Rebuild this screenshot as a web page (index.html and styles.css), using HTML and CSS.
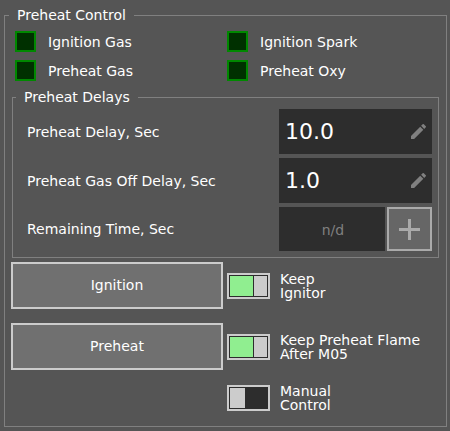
FILE: index.html
```html
<!DOCTYPE html>
<html lang="en">
<head>
    <meta charset="UTF-8">
    <meta name="viewport" content="width=device-width, initial-scale=1.0">
    <title>Preheat Control</title>
    <link rel="stylesheet" href="styles.css">
</head>
<body>
    <fieldset class="panel">
        <legend>Preheat Control</legend>
        <div class="indicators">
            <div class="indicator"><span class="led"></span>Ignition Gas</div>
            <div class="indicator"><span class="led"></span>Ignition Spark</div>
            <div class="indicator"><span class="led"></span>Preheat Gas</div>
            <div class="indicator"><span class="led"></span>Preheat Oxy</div>
        </div>
        <fieldset class="delays">
            <legend>Preheat Delays</legend>
            <div class="delay-row">
                <label for="preheat-delay">Preheat Delay, Sec</label>
                <div class="value-box">
                    <input type="text" id="preheat-delay" value="10.0">
                    <svg class="edit-icon" viewBox="3 3 18 18"><path d="M3 17.25V21h3.75L17.81 9.94l-3.75-3.75L3 17.25zM20.71 7.04a1 1 0 0 0 0-1.41l-2.34-2.34a1 1 0 0 0-1.41 0l-1.83 1.83 3.75 3.75 1.83-1.83z"/></svg>
                </div>
            </div>
            <div class="delay-row">
                <label for="gas-off-delay">Preheat Gas Off Delay, Sec</label>
                <div class="value-box">
                    <input type="text" id="gas-off-delay" value="1.0">
                    <svg class="edit-icon" viewBox="3 3 18 18"><path d="M3 17.25V21h3.75L17.81 9.94l-3.75-3.75L3 17.25zM20.71 7.04a1 1 0 0 0 0-1.41l-2.34-2.34a1 1 0 0 0-1.41 0l-1.83 1.83 3.75 3.75 1.83-1.83z"/></svg>
                </div>
            </div>
            <div class="delay-row">
                <label for="remaining-time">Remaining Time, Sec</label>
                <div class="remaining">
                    <input type="text" id="remaining-time" value="n/d" readonly>
                    <button type="button" class="add-button" aria-label="Add time">
                        <svg viewBox="0 0 21 21"><path d="M9 0h3v9h9v3h-9v9H9v-9H0V9h9z"/></svg>
                    </button>
                </div>
            </div>
        </fieldset>
        <div class="actions">
            <button type="button" class="action-button">Ignition</button>
            <label class="toggle"><input type="checkbox" checked><span>Keep<br>Ignitor</span></label>
            <button type="button" class="action-button">Preheat</button>
            <label class="toggle"><input type="checkbox" checked><span>Keep Preheat Flame<br>After M05</span></label>
            <label class="toggle manual"><input type="checkbox"><span>Manual<br>Control</span></label>
        </div>
    </fieldset>
</body>
</html>
```

FILE: styles.css
```css
* {
    box-sizing: border-box;
}

body {
    margin: 4px 3px 4px 4px;
    background-color: #555;
    color: #fff;
    font-family: Verdana, "DejaVu Sans", sans-serif;
    font-size: 14px;
    line-height: 22px;
}

input,
button {
    font: inherit;
    color: inherit;
    border-radius: 0;
    margin: 0;
}

fieldset {
    min-width: 0;
    margin: 0;
    border: 1px solid #808080;
}

legend {
    padding: 0 8px;
}

.panel {
    padding: 5px 7px 14px 6px;
}

.panel > legend {
    margin-left: -2px;
}

.indicators {
    display: grid;
    grid-template-columns: 1fr 1fr;
    row-gap: 8px;
    padding-left: 4px;
}

.indicator {
    display: flex;
    align-items: center;
    gap: 12px;
    height: 21px;
}

.led {
    width: 21px;
    height: 21px;
    background-color: #003000;
    border: 2px solid #008800;
}

/* Delays */
.delays {
    display: flex;
    flex-direction: column;
    gap: 4px;
    margin: 5px 0 4px 1px;
    padding: 1px 6px 6px;
}

.delays legend {
    margin-left: -3px;
}

.delay-row {
    display: flex;
    align-items: center;
    justify-content: space-between;
    padding-left: 8px;
}

.value-box {
    display: flex;
    align-items: center;
    width: 153px;
    height: 45px;
    padding: 0 6px;
    background-color: #2d2d2d;
}

.value-box input {
    flex: 1;
    min-width: 0;
    padding: 0;
    background: none;
    border: none;
    font-size: 22px;
}

.edit-icon {
    width: 15px;
    height: 15px;
    fill: #808080;
}

.remaining {
    display: flex;
    gap: 2px;
    width: 153px;
    height: 44px;
}

.remaining input {
    flex: 1;
    min-width: 0;
    padding: 2px 0 0 2px;
    background-color: #2d2d2d;
    border: none;
    color: #808080;
    text-align: center;
}

.add-button {
    display: flex;
    align-items: center;
    justify-content: center;
    width: 45px;
    padding: 0;
    background-color: #666;
    border: 2px solid #aaa;
}

.add-button svg {
    width: 21px;
    height: 21px;
    fill: #aaa;
}

/* Actions */
.actions {
    display: grid;
    grid-template-columns: 1fr 1fr;
    align-items: center;
    gap: 14px 4px;
}

.action-button {
    height: 47px;
    padding: 0 0 2px;
    background-color: #707070;
    border: 2px solid #ccc;
    cursor: pointer;
}

.toggle {
    display: flex;
    align-items: center;
    gap: 10px;
    line-height: 14px;
    white-space: nowrap;
}

.toggle input {
    appearance: none;
    width: 43px;
    height: 26px;
    padding: 1px;
    border: 2px solid #ccc;
    background: linear-gradient(to right, #ccc 15px, #2d2d2d 15px) content-box, #2d2d2d;
}

.toggle input:checked {
    background: linear-gradient(to right, #90ee90 23px, #2d2d2d 23px, #2d2d2d 24px, #ccc 24px) content-box, #2d2d2d;
}

.manual {
    grid-column: 2;
}
```
